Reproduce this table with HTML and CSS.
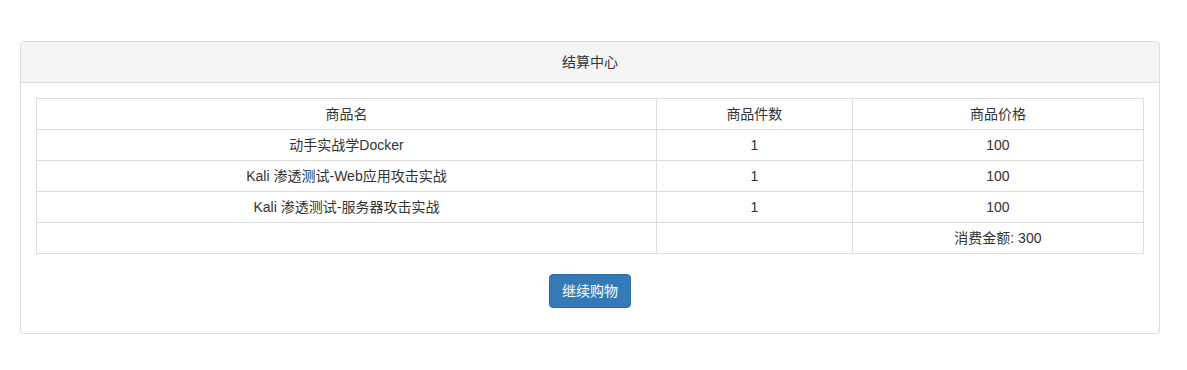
FILE: index.html
```html
<!DOCTYPE html>
<html lang="zh-CN">
<head>
    <meta charset="UTF-8">
    <meta name="viewport" content="width=device-width, initial-scale=1.0">
    <title>结算中心</title>
    <link rel="stylesheet" href="styles.css">
</head>
<body>
    <div class="panel">
        <div class="panel-heading">结算中心</div>
        <div class="panel-body">
            <table class="cart-table">
                <thead>
                    <tr>
                        <th class="col-name">商品名</th>
                        <th class="col-count">商品件数</th>
                        <th class="col-price">商品价格</th>
                    </tr>
                </thead>
                <tbody>
                    <tr>
                        <td>动手实战学Docker</td>
                        <td>1</td>
                        <td>100</td>
                    </tr>
                    <tr>
                        <td>Kali 渗透测试-Web应用攻击实战</td>
                        <td>1</td>
                        <td>100</td>
                    </tr>
                    <tr>
                        <td>Kali 渗透测试-服务器攻击实战</td>
                        <td>1</td>
                        <td>100</td>
                    </tr>
                    <tr>
                        <td></td>
                        <td></td>
                        <td>消费金额: 300</td>
                    </tr>
                </tbody>
            </table>
            <p class="actions">
                <button type="button" class="btn-primary">继续购物</button>
            </p>
        </div>
    </div>
</body>
</html>
```

FILE: styles.css
```css
body {
    font-family: "Liberation Sans", Arial, "Noto Sans CJK SC", sans-serif;
    font-size: 14px;
    line-height: 20px;
    color: #333;
    background-color: #fff;
    margin: 0;
    padding: 41px 27px 0 20px;
}

.panel {
    border: 1px solid #ddd;
    border-radius: 4px;
    box-shadow: 0 1px 1px rgba(0, 0, 0, 0.05);
}

.panel-heading {
    background-color: #f5f5f5;
    border-bottom: 1px solid #ddd;
    border-radius: 3px 3px 0 0;
    padding: 10px 15px;
    text-align: center;
}

.panel-body {
    padding: 15px;
}

.cart-table {
    width: 100%;
    border-collapse: collapse;
    margin-bottom: 20px;
}

.cart-table th,
.cart-table td {
    border: 1px solid #ddd;
    padding: 5px;
    height: 20px;
    text-align: center;
    font-weight: normal;
}

.col-name {
    width: 56%;
}

.col-count {
    width: 17.7%;
}

.actions {
    margin: 0 0 10px;
    text-align: center;
}

.btn-primary {
    font-family: inherit;
    font-size: 14px;
    line-height: 20px;
    color: #fff;
    background-color: #337ab7;
    border: 1px solid #2e6da4;
    border-radius: 4px;
    padding: 6px 12px;
    cursor: pointer;
}

.btn-primary:hover {
    background-color: #286090;
}
```
